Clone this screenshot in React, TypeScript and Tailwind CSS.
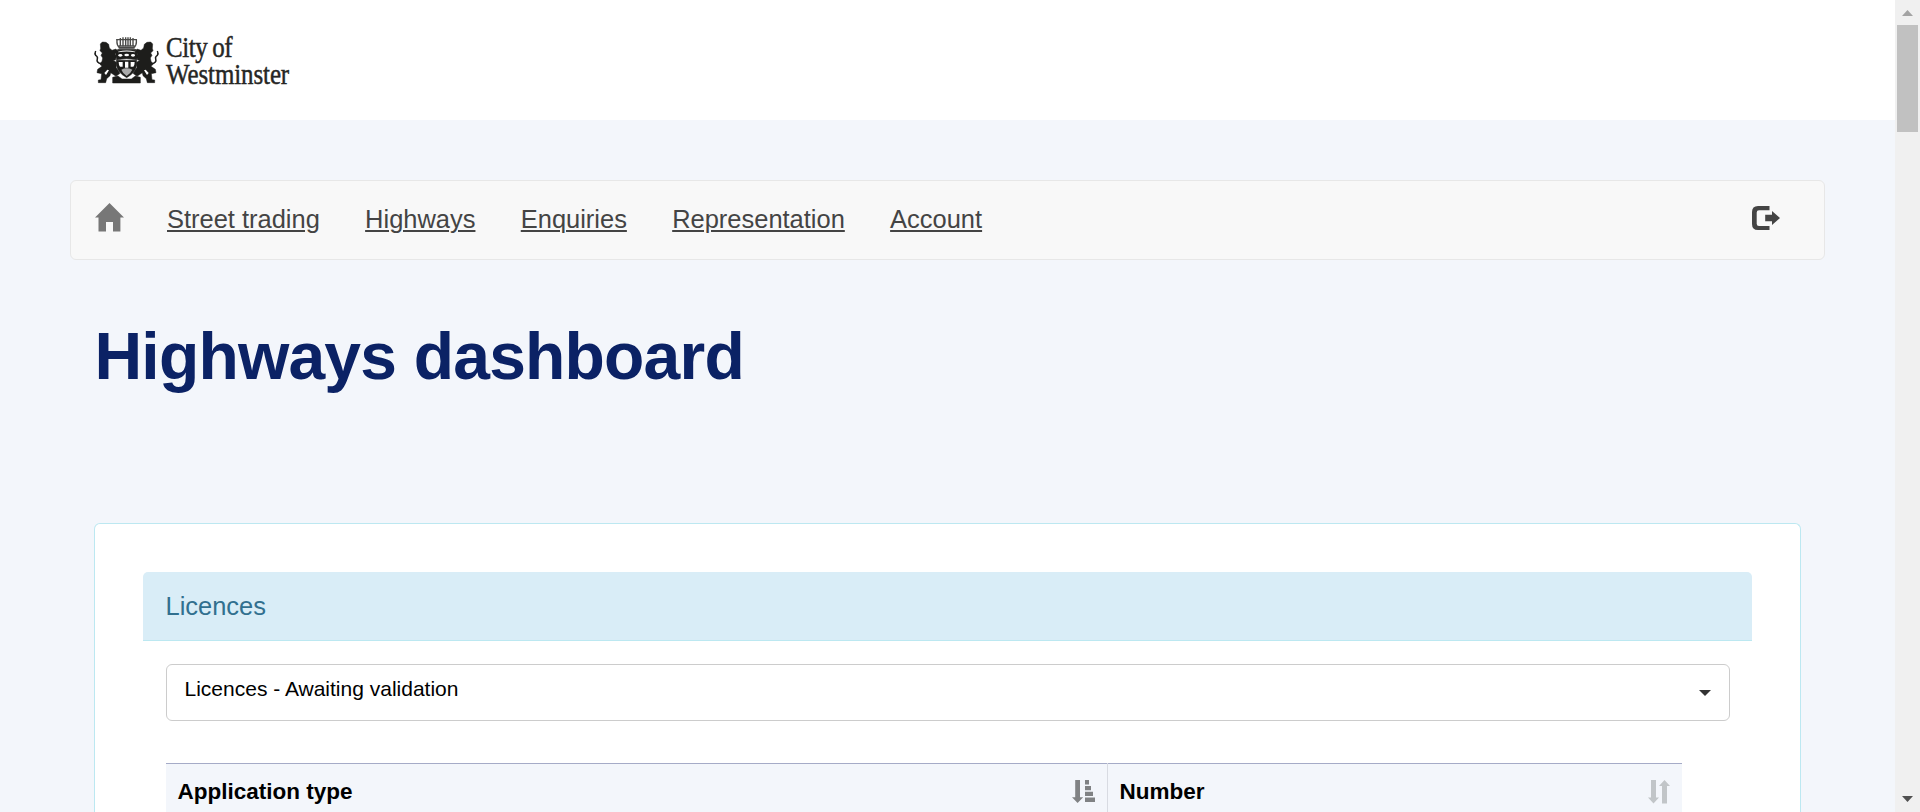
import React from 'react';

function Logo() {
  return (
    <div className="flex h-[60px] w-[210px]">
      <svg className="block h-[60px] w-[75px] shrink-0" viewBox="0 0 225 180" role="img" aria-label="Coat of arms">
        <g fill="#1d1d1b" stroke="#1d1d1b" strokeWidth="1.5" strokeLinejoin="round">
          <path d="M30 62 L32 55 L31 42 L37 36 L48 37 L56 43 L58 54 L66 61 L78 57 L82 63 L75 72 L80 79 L76 90 L70 90 L80 98 L78 112 L90 130 L78 139 L62 128 L60 137 L50 146 L47 158 L25 158 L25 150 L33 149 L35 131 L21 128 L23 118 L36 109 L29 102 L36 94 L38 84 L33 76 L37 69Z" />
          <path d="M189 62 L187 55 L188 42 L182 36 L171 37 L163 43 L161 54 L153 61 L141 57 L137 63 L144 72 L139 79 L143 90 L149 90 L139 98 L141 112 L129 130 L141 139 L157 128 L159 137 L169 146 L172 158 L194 158 L194 150 L186 149 L184 131 L198 128 L196 118 L183 109 L190 102 L183 94 L181 84 L186 76 L182 69Z" />
          <path d="M76 62 Q110 54 145 62 L140 90 Q110 82 80 90Z" />
          <path d="M79 91 H140 V105 Q137 128 110 143 Q83 128 79 105Z" />
          <path d="M68 142 L84 138 L96 147 H124 L136 138 L151 142 V159 H68Z" />
        </g>
        <g fill="none" stroke="#1d1d1b" strokeWidth="4.5">
          <path d="M34 101 Q18 98 22 86 Q24 80 17 76 Q13 71 17 63 M185 101 Q201 98 197 86 Q195 80 202 76 Q206 71 202 63" />
        </g>
        <g fill="none" stroke="#4a4a48" strokeWidth="4.2">
          <path d="M81 27 Q79 50 91 53 H129 Q141 50 139 27 M91 24 V48 M99 22 V49 M107 22 V49 M114 22 V49 M121 22 V49 M129 24 V48" />
          <path d="M79 29 H141 M86 48 H134 M86 54 H134 M82 59 H139" />
        </g>
        <g fill="#fff">
          <ellipse cx="91" cy="76" rx="6" ry="4" />
          <ellipse cx="110" cy="75" rx="7" ry="4" />
          <ellipse cx="129" cy="76" rx="6" ry="4" />
          <path d="M84 65 Q110 58 136 65 L135 67 Q110 62 85 67Z" />
          <path d="M86 96 H98 V110 H90 Q86 106 86 96 M105 95 H115 V113 H105Z M122 96 H134 Q134 106 130 110 H122Z" />
          <path d="M43 129 L52 119 L57 121 L48 135Z M176 129 L167 119 L162 121 L171 135Z" />
        </g>
        <path d="M94 119 Q110 111 127 119 Q122 130 110 138 Q98 130 94 119Z" fill="#aaa" />
      </svg>
      <div className="mt-[3.5px] ml-[1px] w-[143px] shrink-0 origin-left scale-x-[0.875] font-['Liberation_Serif',serif] text-[28.5px] leading-[27px] tracking-[-0.1px] text-[#262624] [-webkit-text-stroke:0.45px_#262624]">
        <div className="whitespace-nowrap tracking-[-0.5px] [word-spacing:-1px]">City of</div>
        <div className="whitespace-nowrap">Westminster</div>
      </div>
    </div>
  );
}

function HomeIcon() {
  return (
    <svg className="block h-[29px] w-[29px]" viewBox="0 0 29 29" fill="#777">
      <path d="M14.5 0 29 14.6H25.4V28.5H18V19H11V28.5H3.5V14.6H0Z" />
    </svg>
  );
}

function LogOutIcon() {
  return (
    <svg className="block h-6 w-7" viewBox="0 0 28 24" fill="#444">
      <path d="M17.5 0H6Q0 0 0 6V18Q0 24 6 24H17.5V20H7Q4.7 20 4.7 17.7V6.5Q4.7 4.3 7 4.3H17.5Z" />
      <path d="M13.2 8.8H20V5L28 12 20 19V15.2H13.2Z" />
    </svg>
  );
}

function SortAscIcon() {
  return (
    <svg className="block h-[23px] w-[23px]" viewBox="0 0 23 23" fill="#808284">
      <path d="M3.2 0H8V17.2H11.2L5.6 23 0 17.2H3.2Z M13 0H17V4.6H13Z M13 6H19V10.3H13Z M13 11.7H21V16H13Z M13 17.6H23V22H13Z" />
    </svg>
  );
}

function SortIcon() {
  return (
    <svg className="block h-6 w-[22px]" viewBox="0 0 22 24" fill="#c1c5c8">
      <path d="M3 0H8V17.5H11L5.5 23.5 0 17.5H3Z M16.5 0 22 6H19V23.5H14V6H11Z" />
    </svg>
  );
}

function Scrollbar() {
  return (
    <div className="flex h-full w-[25px] shrink-0 flex-col items-center justify-between bg-[#f0f0f0] pt-[10px] pb-[10px]">
      <div className="flex flex-col items-center">
        <svg className="block h-[6px] w-[11px]" viewBox="0 0 11 6" fill="#a3a3a3"><path d="M5.5 0 11 6H0Z" /></svg>
        <div className="mt-[9px] h-[107px] w-[21px] bg-[#c1c1c1]" />
      </div>
      <svg className="block h-[6px] w-[11px]" viewBox="0 0 11 6" fill="#505050"><path d="M0 0H11L5.5 6Z" /></svg>
    </div>
  );
}

const links = ['Street trading', 'Highways', 'Enquiries', 'Representation', 'Account'];

export default function App() {
  return (
    <div className="flex h-[812px] w-full overflow-hidden bg-[#f3f6fb] font-['Liberation_Sans',Arial,sans-serif]">
      <div className="flex min-w-0 flex-1 flex-col">
        <header className="h-[120px] shrink-0 bg-white pt-[30px] pl-[90px]">
          <Logo />
        </header>

        <nav className="mt-[60px] mr-[70px] ml-[70px] flex h-20 shrink-0 items-center rounded-[6px] border border-[#e7e7e7] bg-[#f8f8f8] pr-[44px] pl-[24px]">
          <a className="mb-[6px]"><HomeIcon /></a>
          <ul className="mb-[2px] ml-[43px] flex flex-1 gap-[45.3px] text-[25.46px] leading-[36px] text-[#444]">
            {links.map((label) => (
              <li key={label}>
                <a className="whitespace-nowrap underline decoration-2 underline-offset-[2px]">{label}</a>
              </li>
            ))}
          </ul>
          <a className="mb-[4px]"><LogOutIcon /></a>
        </nav>

        <h1 className="mt-[58px] ml-[94.5px] h-[76px] shrink-0 text-[66px] leading-[76px] font-bold tracking-[-0.8px] text-[#0b2265]">
          Highways dashboard
        </h1>

        <main className="mt-[129px] mr-[94px] ml-[94px] flex-1 rounded-t-[6px] border border-b-0 border-[#bce8f1] bg-white px-12 pt-12">
          <h2 className="h-[69px] rounded-t-[5px] border-b border-[#bce8f1] bg-[#d9edf7] pl-[22.5px] text-[25.46px] leading-[68px] text-[#31708f]">
            Licences
          </h2>
          <div className="mt-[23px] mr-[22px] ml-[23px] flex h-[57px] items-center justify-between rounded-[6px] border border-[#ccc] pr-[18px] pl-[17.5px]">
            <span className="mb-[8px] text-[21px] leading-[30px] text-black">Licences - Awaiting validation</span>
            <svg className="block h-[6px] w-3" viewBox="0 0 12 6" fill="#333"><path d="M0 0H12L6 6Z" /></svg>
          </div>
          <table className="mt-[42px] ml-[23px] w-[1516px] table-fixed border-collapse text-[22.5px] leading-[32px]">
            <thead>
              <tr className="h-[60px] bg-[#f3f6fb]">
                <th className="w-[941px] border-t border-r border-t-[#a5abc7] border-r-[#d8dbe2] p-0 pt-3 align-top">
                  <div className="flex justify-between pr-[12px] pl-[11.5px] text-left">
                    Application type
                    <span className="mt-[4px]"><SortAscIcon /></span>
                  </div>
                </th>
                <th className="border-t border-t-[#a5abc7] p-0 pt-3 align-top">
                  <div className="flex justify-between pr-[12px] pl-[12px] text-left">
                    Number
                    <span className="mt-[4px]"><SortIcon /></span>
                  </div>
                </th>
              </tr>
            </thead>
          </table>
        </main>
      </div>
      <Scrollbar />
    </div>
  );
}
